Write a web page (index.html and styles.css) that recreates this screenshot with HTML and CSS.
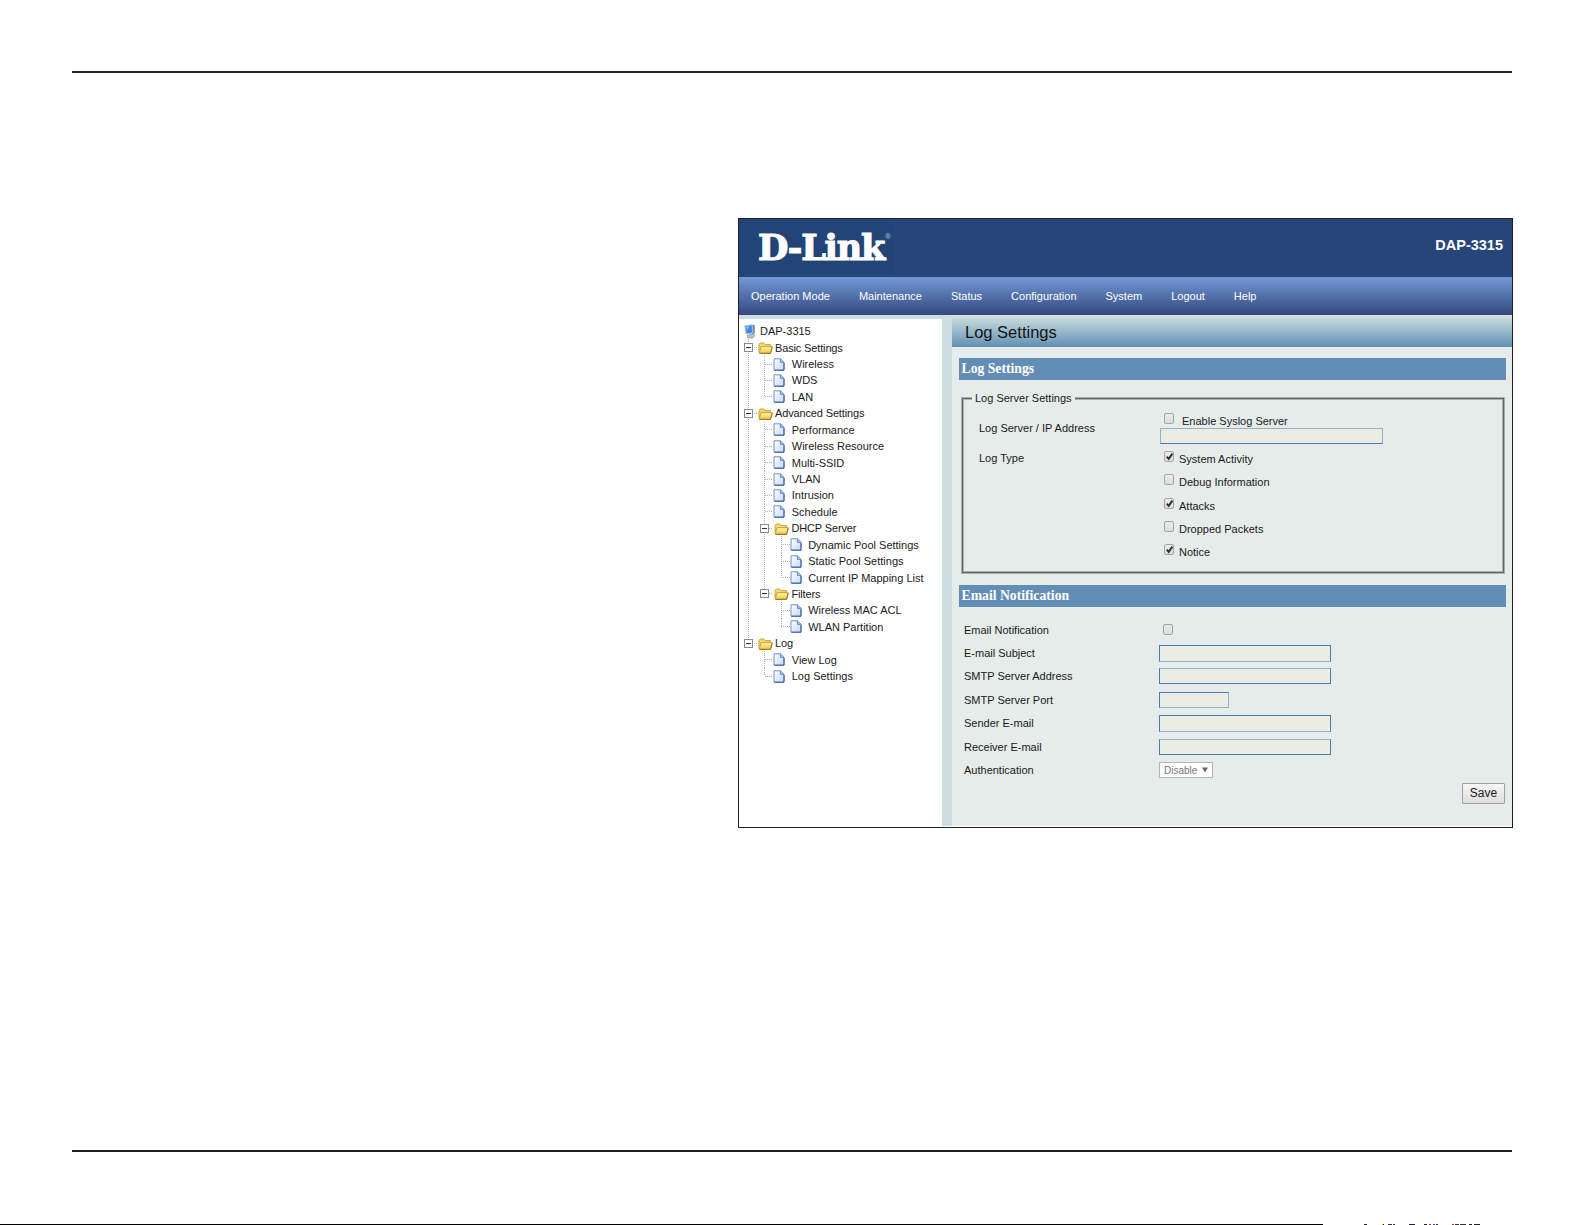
FILE: index.html
```html
<!DOCTYPE html>
<html lang="en">
<head>
    <meta charset="UTF-8">
    <meta name="viewport" content="width=device-width, initial-scale=1.0">
    <title>D-Link DAP-3315 - Log Settings</title>
    <link rel="stylesheet" href="styles.css">
</head>
<body>
    <svg class="symbols" width="0" height="0">
        <defs>
            <linearGradient id="paper" x1="0" y1="0" x2="1" y2="1">
                <stop offset="0" stop-color="#ffffff"/>
                <stop offset="1" stop-color="#c3daf7"/>
            </linearGradient>
            <linearGradient id="gold" x1="0" y1="0" x2="0" y2="1">
                <stop offset="0" stop-color="#fff3a0"/>
                <stop offset="1" stop-color="#f0cc50"/>
            </linearGradient>
            <symbol id="page" viewBox="0 0 12 13">
                <path d="M1 .8h6.6L11 4.2v8H1z" fill="url(#paper)" stroke="#6f8fc8"/>
                <path d="M7.4 1v3.4H11" fill="#a9c4ee" stroke="#5578b8" stroke-width=".8"/>
                <path d="M1.5 12.2H11V5" fill="none" stroke="#3c5a9a"/>
            </symbol>
            <symbol id="folder" viewBox="0 0 15 12">
                <path d="M1 10V2.5L2.2 1h3.6L7 2.6h5.4V5" fill="#f3d770" stroke="#c9a53a"/>
                <path d="M1.2 11.2 3 4.6h11.2l-1.6 6.6z" fill="url(#gold)" stroke="#c9a53a"/>
                <path d="M1.5 11.4h11L14.3 5" fill="none" stroke="#8a6f1c" stroke-width=".9"/>
            </symbol>
            <symbol id="computer" viewBox="0 0 12 15">
                <path d="M7 1.2 10.8.8v8.4L8 11z" fill="#7488ad"/>
                <path d="M.8 1.8 8 .8l1 8L2.2 10z" fill="#3c8be2" stroke="#a9bedc"/>
                <path d="M2 2.8 5 2.3 3.4 6z" fill="#9fd0ff"/>
                <path d="M3.5 11.2 9 10l2 1.8-2.6 2.4-4.9-.6z" fill="#b4c0d4" stroke="#7f8da6" stroke-width=".7"/>
            </symbol>
            <symbol id="tick" viewBox="0 0 11 11">
                <path d="M2.8 5.7 4.7 7.8 8.4 2.7" fill="none" stroke="#333" stroke-width="2"/>
            </symbol>
        </defs>
    </svg>

    <hr class="rule">

    <main class="window">
        <header class="banner">
            <div class="logo">D-Link<sup>®</sup></div>
            <div class="model">DAP-3315</div>
        </header>
        <nav class="menu">
            <a>Operation Mode</a>
            <a>Maintenance</a>
            <a>Status</a>
            <a>Configuration</a>
            <a>System</a>
            <a>Logout</a>
            <a>Help</a>
        </nav>

        <div class="columns">
            <aside class="sidebar">
                <div class="row root"><svg class="computer"><use href="#computer"/></svg>DAP-3315</div>
                <ul class="tree">
                    <li>
                        <div class="row folder"><i class="branch"><b></b></i><svg><use href="#folder"/></svg>Basic Settings</div>
                        <ul>
                            <li><div class="row"><i class="branch"></i><svg><use href="#page"/></svg>Wireless</div></li>
                            <li><div class="row"><i class="branch"></i><svg><use href="#page"/></svg>WDS</div></li>
                            <li><div class="row"><i class="branch"></i><svg><use href="#page"/></svg>LAN</div></li>
                        </ul>
                    </li>
                    <li>
                        <div class="row folder"><i class="branch"><b></b></i><svg><use href="#folder"/></svg>Advanced Settings</div>
                        <ul>
                            <li><div class="row"><i class="branch"></i><svg><use href="#page"/></svg>Performance</div></li>
                            <li><div class="row"><i class="branch"></i><svg><use href="#page"/></svg>Wireless Resource</div></li>
                            <li><div class="row"><i class="branch"></i><svg><use href="#page"/></svg>Multi-SSID</div></li>
                            <li><div class="row"><i class="branch"></i><svg><use href="#page"/></svg>VLAN</div></li>
                            <li><div class="row"><i class="branch"></i><svg><use href="#page"/></svg>Intrusion</div></li>
                            <li><div class="row"><i class="branch"></i><svg><use href="#page"/></svg>Schedule</div></li>
                            <li>
                                <div class="row folder"><i class="branch"><b></b></i><svg><use href="#folder"/></svg>DHCP Server</div>
                                <ul>
                                    <li><div class="row"><i class="branch"></i><svg><use href="#page"/></svg>Dynamic Pool Settings</div></li>
                                    <li><div class="row"><i class="branch"></i><svg><use href="#page"/></svg>Static Pool Settings</div></li>
                                    <li><div class="row"><i class="branch"></i><svg><use href="#page"/></svg>Current IP Mapping List</div></li>
                                </ul>
                            </li>
                            <li>
                                <div class="row folder"><i class="branch"><b></b></i><svg><use href="#folder"/></svg>Filters</div>
                                <ul>
                                    <li><div class="row"><i class="branch"></i><svg><use href="#page"/></svg>Wireless MAC ACL</div></li>
                                    <li><div class="row"><i class="branch"></i><svg><use href="#page"/></svg>WLAN Partition</div></li>
                                </ul>
                            </li>
                        </ul>
                    </li>
                    <li>
                        <div class="row folder"><i class="branch"><b></b></i><svg><use href="#folder"/></svg>Log</div>
                        <ul>
                            <li><div class="row"><i class="branch"></i><svg><use href="#page"/></svg>View Log</div></li>
                            <li><div class="row"><i class="branch"></i><svg><use href="#page"/></svg>Log Settings</div></li>
                        </ul>
                    </li>
                </ul>
            </aside>

            <section class="content">
                <h1>Log Settings</h1>
                <h2>Log Settings</h2>
                <fieldset class="log-server">
                    <legend>Log Server Settings</legend>
                    <div class="server-row">
                        <span class="label">Log Server / IP Address</span>
                        <div class="server">
                            <div class="option enable"><span class="check"></span>Enable Syslog Server</div>
                            <div class="field"></div>
                        </div>
                    </div>
                    <div class="type-row">
                        <span class="label">Log Type</span>
                        <div class="types">
                            <div class="option"><span class="check"><svg><use href="#tick"/></svg></span>System Activity</div>
                            <div class="option"><span class="check"></span>Debug Information</div>
                            <div class="option"><span class="check"><svg><use href="#tick"/></svg></span>Attacks</div>
                            <div class="option"><span class="check"></span>Dropped Packets</div>
                            <div class="option"><span class="check"><svg><use href="#tick"/></svg></span>Notice</div>
                        </div>
                    </div>
                </fieldset>

                <h2>Email Notification</h2>
                <div class="email">
                    <div class="email-row"><span>Email Notification</span><span class="check"></span></div>
                    <div class="email-row"><span>E-mail Subject</span><div class="field tall"></div></div>
                    <div class="email-row"><span>SMTP Server Address</span><div class="field"></div></div>
                    <div class="email-row"><span>SMTP Server Port</span><div class="field short"></div></div>
                    <div class="email-row"><span>Sender E-mail</span><div class="field tall"></div></div>
                    <div class="email-row"><span>Receiver E-mail</span><div class="field"></div></div>
                    <div class="email-row"><span>Authentication</span><div class="select">Disable<svg viewBox="0 0 6 6"><path d="M0 .5h6L3 5.5z"/></svg></div></div>
                </div>
                <button class="save">Save</button>
            </section>
        </div>
    </main>

    <hr class="rule bottom">
    <div class="edge"><i></i></div>
</body>
</html>
```

FILE: styles.css
```css
* {
    margin: 0;
    padding: 0;
    box-sizing: border-box;
}

body {
    width: 1585px;
    height: 1225px;
    display: flex;
    flex-direction: column;
    overflow: hidden;
    background: #fff;
    color: #1a1a1a;
    font-family: "Liberation Sans", Arial, sans-serif;
    font-size: 11px;
}

.symbols {
    position: absolute;
}

.rule {
    flex: none;
    width: 1440px;
    height: 2px;
    margin: 71px 0 0 72px;
    border: 0;
    background: #231f20;
}

.rule.bottom {
    margin-top: 322px;
}

.edge {
    height: 1px;
    margin-top: 72px;
    display: flex;
    background: linear-gradient(#000, #000) 0 0 / 1323px 1px no-repeat;
}

.edge i {
    width: 117px;
    height: 1px;
    margin-left: 1364px;
    background:
        linear-gradient(90deg, #222 3px, transparent 3px 18px, #cc0 18px 19px, #222 19px 20px, transparent 20px 24px, #333 24px 28px, transparent 28px 29px, #333 29px 31px, transparent 31px 45px, #223 45px 51px, transparent 51px 60px, #222 60px 63px, transparent 63px 65px, #a33 65px 67px, transparent 67px 69px, #44a 69px 71px, transparent 71px 72px, #333 72px 74px, transparent 74px 88px, #a33 88px 90px, transparent 90px 91px, #333 91px 95px, transparent 95px 96px, #333 96px 102px, transparent 102px 105px, #222 105px 108px, transparent 108px 110px, #222 110px 116px, transparent 116px);
}

.window {
    flex: none;
    width: 775px;
    height: 610px;
    margin: 145px 0 0 738px;
    border: 1px solid #231f20;
    display: flex;
    flex-direction: column;
}

/* Header */
.banner {
    height: 58px;
    padding: 0 9px 0 19px;
    display: flex;
    justify-content: space-between;
    background: linear-gradient(90deg, #234476 155px, #27457a 155px);
    color: #fff;
}

.logo {
    display: flex;
    font-family: "DejaVu Serif", serif;
    font-size: 35px;
    font-weight: bold;
    letter-spacing: -1.2px;
    line-height: 58px;
    -webkit-text-stroke: 1.2px #fff;
}

.logo sup {
    margin: 14px 0 0 1px;
    font-family: "Liberation Sans", Arial, sans-serif;
    font-size: 8px;
    font-weight: normal;
    letter-spacing: 0;
    line-height: 8px;
    color: #b4c4dc;
    -webkit-text-stroke: 0;
}

.model {
    padding-top: 17px;
    font-size: 14.5px;
    font-weight: bold;
    line-height: 18px;
}

.menu {
    height: 38px;
    padding-left: 12px;
    display: flex;
    gap: 29px;
    background: linear-gradient(#7199d6, #35487f);
    color: #fff;
    line-height: 38px;
}

.columns {
    flex: 1;
    display: flex;
    background: #ccdee0;
    border-bottom: 1px solid #fff;
}

/* Tree */
.sidebar {
    width: 203px;
    margin: 4px 10px 0 0;
    padding: 4px 0 0 1.4px;
    background: #fff;
}

.row {
    height: 16.43px;
    display: flex;
    align-items: center;
    white-space: nowrap;
}

.row svg {
    flex: none;
    width: 12px;
    height: 13px;
    margin: 0 6.4px 0 0.2px;
}

.row.folder svg {
    width: 15px;
    height: 12px;
    margin: 1px 2.4px 0 0.9px;
}

.row .computer {
    width: 12px;
    height: 15px;
    margin: 0 3.6px 0 4px;
}

.row.folder {
    letter-spacing: -0.15px;
}

.tree,
.tree ul {
    list-style: none;
}

.tree ul {
    margin-left: 16.4px;
}

.tree li {
    background: repeating-linear-gradient(#b0b0b0 0 1px, #fff 1px 2px) 7.6px 0 / 1px 100% no-repeat;
}

.tree li:last-child {
    background-size: 1px 8px;
}

.branch {
    flex: none;
    width: 16.4px;
    height: 9px;
    background: repeating-linear-gradient(90deg, #b0b0b0 0 1px, #fff 1px 2px) 8px 4px / 9px 1px no-repeat;
}

.branch b {
    display: block;
    width: 9px;
    height: 9px;
    margin-left: 3.6px;
    border: 1px solid #8a8a8a;
    background: linear-gradient(#333, #333) 1px 3px / 5px 1px no-repeat #fff;
}

/* Content */
.content {
    flex: 1;
    display: flex;
    flex-direction: column;
    background: #e6ecea;
}

h1 {
    height: 32px;
    padding-left: 13px;
    background: linear-gradient(#d2e2e1, #628fb3);
    color: #111;
    font-size: 16.5px;
    font-weight: normal;
    line-height: 34px;
}

h2 {
    height: 22px;
    margin: 11px 6px 0 7px;
    padding-left: 2.5px;
    background: #628db5;
    color: #fff;
    font-family: "Liberation Serif", "Times New Roman", serif;
    font-size: 13.7px;
    line-height: 21px;
}

.log-server {
    height: 181px;
    margin: 12px 8px 1px 10px;
    border: 1px solid #636665;
    box-shadow: 0 0 0 1px #aaafad, inset 0 0 0 1px #aaafad;
}

.log-server legend {
    margin-left: 9px;
    padding: 0 3px;
    background: #e6ecea;
    line-height: 12px;
}

.server-row,
.type-row {
    display: grid;
    grid-template-columns: 181px 1fr;
    padding-left: 16px;
}

.server-row .label {
    padding-top: 18px;
}

.type-row .label {
    padding-top: 8px;
}

.server {
    padding-top: 7px;
}

.check {
    flex: none;
    width: 10px;
    height: 11px;
    border: 1px solid #a5a5a5;
    border-radius: 2px;
    background: linear-gradient(#ececec, #dcdcdc);
    display: flex;
}

.check svg {
    flex: none;
    width: 11px;
    height: 11px;
    margin: -1px;
}

.option {
    height: 23.3px;
    display: flex;
    gap: 5px;
    padding: 3px 0 0 4px;
    line-height: 16px;
}

.option.enable {
    height: 17px;
    gap: 8px;
    padding-top: 2px;
}

.field {
    width: 172px;
    height: 16px;
    border: 1px solid #4a7ab5;
    border-top-color: #8fb0d0;
    background: #ebece2;
}

.field.tall {
    height: 17px;
    border-top-color: #4a7ab5;
    border-bottom-color: #8fb0d0;
}

.field.short {
    width: 70px;
    border-color: #4a7ab5 #8fb0d0 #8fb0d0 #4a7ab5;
}

.server .field {
    width: 223px;
    border-color: #8fb0d0;
    border-bottom-color: #4a7ab5;
}

.types {
    padding-top: 4px;
}

.email {
    padding: 11px 0 0 12px;
}

.email-row {
    height: 23.4px;
    display: grid;
    grid-template-columns: 195px auto;
    justify-content: start;
    align-items: center;
}

.email-row .check {
    margin-left: 4px;
}

.select {
    width: 54px;
    height: 16px;
    padding-left: 4px;
    display: flex;
    align-items: center;
    gap: 5px;
    border: 1px solid #b4b4b4;
    background: #fff;
    color: #777;
    font-size: 10px;
}

.select svg {
    width: 6px;
    height: 6px;
    fill: #666;
}

.save {
    align-self: flex-end;
    width: 43px;
    height: 21px;
    margin: 1px 7px 0 0;
    border: 1px solid #a0a0a0;
    border-radius: 1px;
    background: linear-gradient(#f7f7f7, #dddddd);
    color: #1a1a1a;
    font-family: inherit;
    font-size: 12px;
}
```
